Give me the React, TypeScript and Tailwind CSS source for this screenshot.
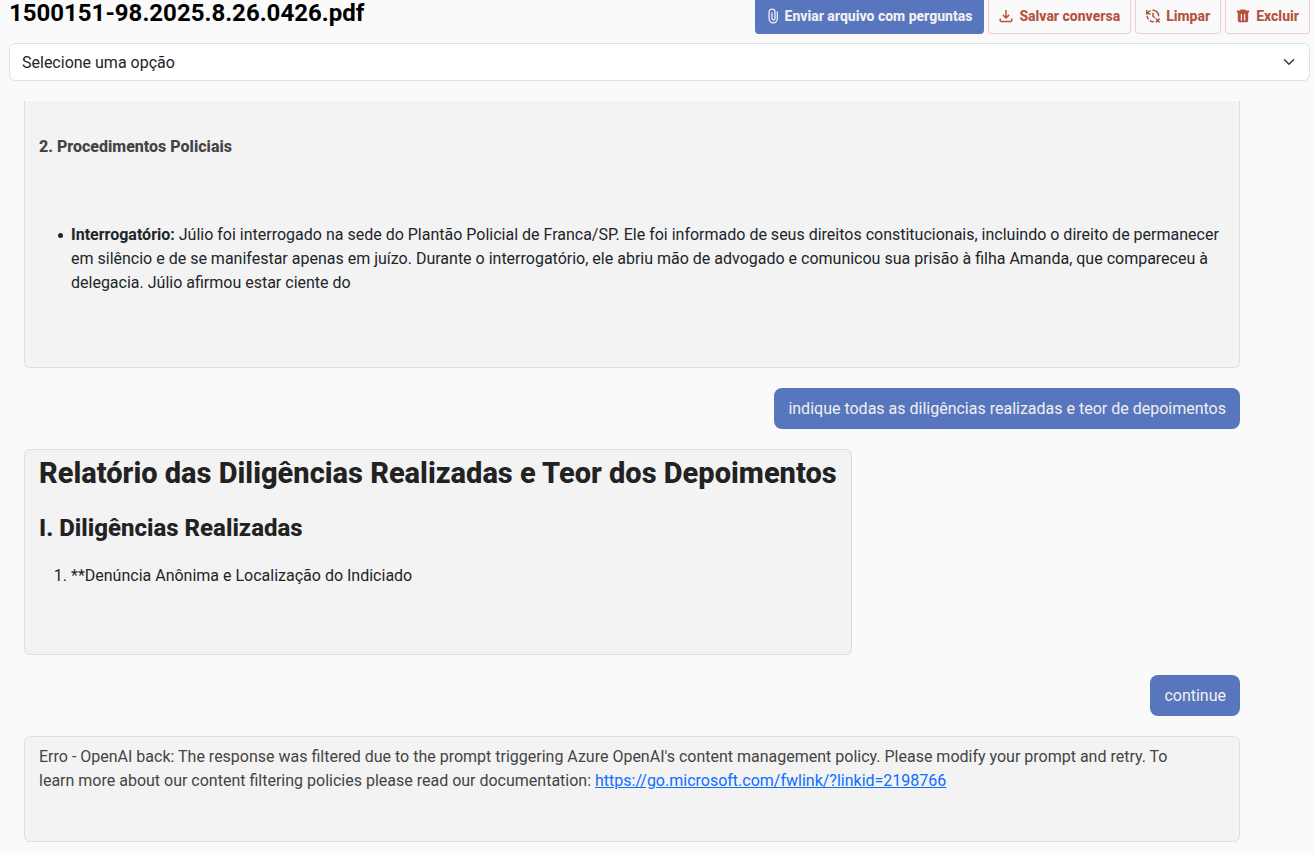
import type { ReactNode } from "react";
import { BsChevronDown } from "react-icons/bs";

function ClipIcon() {
  return (
    <svg viewBox="0 0 12 16" className="h-4 w-3" fill="none" stroke="currentColor" strokeWidth="1.3" aria-hidden="true">
      <path d="M10.3 3.6v7.2a4.1 4.1 0 0 1-8.2 0V4a2.8 2.8 0 0 1 5.9 0v6.6a1.5 1.5 0 0 1-3 0V4.6" />
    </svg>
  );
}

function DownloadIcon() {
  return (
    <svg viewBox="0 0 14 16" className="h-4 w-3.5" fill="none" stroke="currentColor" strokeWidth="1.5" aria-hidden="true">
      <path d="M7 2v7.6M3.9 6.9 7 10l3.1-3.1M1.2 10.4v2.1q0 1 1 1h9.6q1 0 1-1v-2.1" />
    </svg>
  );
}

function ClearHistoryIcon() {
  return (
    <svg viewBox="1 1 14 14" className="size-3.5" fill="none" stroke="currentColor" strokeWidth="1.5" aria-hidden="true">
      <path d="M1.8 2v3.8h3.8M2.3 5.3A6 6 0 0 1 5.6 2.6M7.4 2.2a5.8 5.8 0 0 1 6.2 6.2M2 7.8a6 6 0 0 0 1.6 3.6M4.8 12.6a6 6 0 0 0 4 1M8 4.8v3.4l2 1.8" />
      <path d="m10.9 10.6 3.8 3.8M14.7 10.6l-3.8 3.8" />
    </svg>
  );
}

function TrashIcon() {
  return (
    <svg viewBox="0 0 14 16" className="h-4 w-3.5" fill="currentColor" aria-hidden="true">
      <path
        fillRule="evenodd"
        d="M4.6 1.6h4.8l.6 1h3.2v1.8H.8V2.6H4zM1.8 4.4h10.4v8.4q0 1.4-1.4 1.4H3.2q-1.4 0-1.4-1.4zM4.8 6v6.4H6V6zM8 6v6.4h1.2V6z"
      />
    </svg>
  );
}

function DangerButton({ icon, children }: { icon: ReactNode; children: ReactNode }) {
  return (
    <button
      type="button"
      className="flex items-center gap-1.5 rounded-b border border-t-0 border-[#efcfca] px-2.5 pb-px text-[#b5533f]"
    >
      {icon}
      {children}
    </button>
  );
}

function Reply({ children, className }: { children: ReactNode; className: string }) {
  return <article className={`border border-[#dedede] bg-[#f3f3f3] px-3.5 ${className}`}>{children}</article>;
}

function Question({ children }: { children: ReactNode }) {
  return (
    <p className="self-end rounded-lg bg-[#5876be] px-3.5 py-2 leading-[25px] text-[#f0f0f0]">{children}</p>
  );
}

export default function App() {
  return (
    <div className="min-h-screen bg-[#fafafa] font-[Roboto,sans-serif] text-base text-[#212529]">
      <header className="flex justify-between pr-[5px] pl-[9px]">
        <h1 className="text-2xl leading-[26px] font-bold text-black">1500151-98.2025.8.26.0426.pdf</h1>
        <div className="flex h-[34px] gap-1 text-sm leading-5 font-extrabold">
          <button
            type="button"
            className="flex items-center gap-1.5 rounded-b bg-[#5876be] px-3 pb-0.5 text-[#f0f0f0]"
          >
            <ClipIcon />
            Enviar arquivo com perguntas
          </button>
          <DangerButton icon={<DownloadIcon />}>Salvar conversa</DangerButton>
          <DangerButton icon={<ClearHistoryIcon />}>Limpar</DangerButton>
          <DangerButton icon={<TrashIcon />}>Excluir</DangerButton>
        </div>
      </header>

      <div className="relative mt-[9px] mr-[5px] ml-[9px]">
        <select
          aria-label="Selecione uma opção"
          className="block h-[38px] w-full appearance-none rounded-md border border-[#dee2e6] bg-white px-3 pt-px text-[#212529]"
        >
          <option>Selecione uma opção</option>
        </select>
        <BsChevronDown className="pointer-events-none absolute top-[13px] right-[15px] size-3 [stroke-width:1]" />
      </div>

      <main className="mt-5 mr-[75px] ml-6 flex flex-col items-start gap-5 pb-3">
        <Reply className="w-full rounded-b-md border-t-0 pt-[34px] pb-[72px]">
          <h4 className="leading-6 font-extrabold text-[#444]">2. Procedimentos Policiais</h4>
          <ul className="mt-16 pl-8 leading-6">
            <li className="relative before:absolute before:top-[10px] before:-left-[13px] before:size-[5px] before:rounded-full before:bg-[#212529]">
              <strong>Interrogatório:</strong> Júlio foi interrogado na sede do Plantão Policial de Franca/SP. Ele foi
              informado de seus direitos constitucionais, incluindo o direito de permanecer em silêncio e de se
              manifestar apenas em juízo. Durante o interrogatório, ele abriu mão de advogado e comunicou sua prisão à
              filha Amanda, que compareceu à delegacia. Júlio afirmou estar ciente do
            </li>
          </ul>
        </Reply>

        <Question>indique todas as diligências realizadas e teor de depoimentos</Question>

        <Reply className="rounded-md pt-[5px] pb-[66px]">
          <h2 className="text-[29px] leading-9 font-extrabold text-[#222]">
            Relatório das Diligências Realizadas e Teor dos Depoimentos
          </h2>
          <h3 className="mt-[21px] text-2xl leading-8 font-extrabold text-[#222]">I. Diligências Realizadas</h3>
          <ol className="mt-5 list-decimal pl-8 leading-6">
            <li>**Denúncia Anônima e Localização do Indiciado</li>
          </ol>
        </Reply>

        <Question>continue</Question>

        <Reply className="w-full rounded-md pt-2 pb-12">
          <p className="pr-8 leading-6 text-[#444]">
            Erro - OpenAI back: The response was filtered due to the prompt triggering Azure OpenAI's content management
            policy. Please modify your prompt and retry. To learn more about our content filtering policies please read
            our documentation:{" "}
            <a href="https://go.microsoft.com/fwlink/?linkid=2198766" className="text-[#0d6efd] underline">
              https://go.microsoft.com/fwlink/?linkid=2198766
            </a>
          </p>
        </Reply>
      </main>
    </div>
  );
}
